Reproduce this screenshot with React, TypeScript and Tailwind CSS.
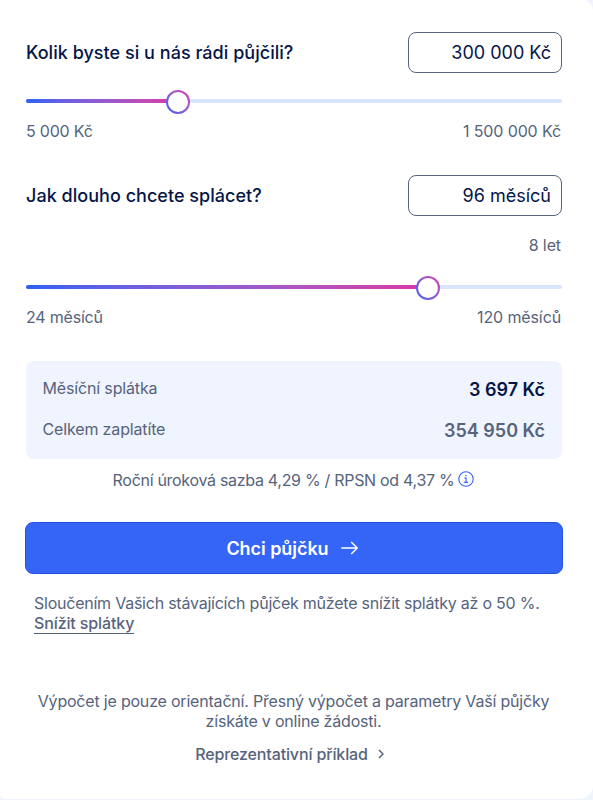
import React from "react";

type SliderProps = {
  percent: number;
  min: string;
  max: string;
};

const Slider = ({ percent, min, max }: SliderProps) => {
  return (
    <div>
      <div className="relative flex h-6 items-center">
        <div className="h-1 w-full overflow-hidden rounded-full bg-[#d9e4fd]">
          <div
            className="h-full bg-linear-to-r from-[#2a60f6] to-[#dc35a5]"
            style={{ width: `${percent}%` }}
          />
        </div>
        <div
          className="absolute top-px size-6 -translate-x-1/2 rounded-full bg-linear-to-tr from-[#2f5ff5] to-[#d637aa] p-[1.8px]"
          style={{ left: `${percent}%` }}
        >
          <div className="size-full rounded-full bg-white" />
        </div>
      </div>
      <div className="mt-2 flex justify-between leading-5">
        <span>{min}</span>
        <span className="pr-px tracking-[-0.12px]">{max}</span>
      </div>
    </div>
  );
};

const Field = ({ label, value }: { label: string; value: string }) => {
  return (
    <div className="flex h-[41px] items-center justify-between text-lg tracking-normal text-[#061549]">
      <label className="font-medium tracking-[0.03px]">{label}</label>
      <div className="flex h-full w-[154px] items-center justify-end rounded-lg border-[1.3px] border-[#56647d] pr-2.5">
        {value}
      </div>
    </div>
  );
};

const InfoIcon = () => (
  <svg className="-mt-[3px] size-4" viewBox="0 0 16 16" fill="none" stroke="#3563f5">
    <circle cx="8" cy="8" r="7.2" strokeWidth="1.1" />
    <path d="M6.4 7.1h1.7v4.2M6.1 11.4h4" strokeWidth="1.1" />
    <circle cx="7.9" cy="4.6" r="0.8" fill="#3563f5" stroke="none" />
  </svg>
);

const App = () => {
  return (
    <div className="h-[800px] w-[593px] bg-[#f0f4fe]">
      <main className="h-[799px] rounded-tr-[10px] rounded-br-[14px] rounded-bl-[5px] bg-white pt-8 pr-[31px] pl-[26px] font-['Inter',sans-serif] text-base tracking-[-0.2px] text-[#56637c]">
        <Field label="Kolik byste si u nás rádi půjčili?" value="300 000 Kč" />
        <div className="mt-4">
          <Slider percent={28.4} min="5 000 Kč" max="1 500 000 Kč" />
        </div>

        <div className="mt-[34px]">
          <Field label="Jak dlouho chcete splácet?" value="96 měsíců" />
        </div>
        <div className="mt-[19px] pr-px text-right leading-5 tracking-[-0.1px]">8 let</div>
        <div className="mt-5 -mb-px">
          <Slider percent={75} min="24 měsíců" max="120 měsíců" />
        </div>

        <div className="mt-[35px] h-[98px] rounded-lg bg-[#f0f4fe] pt-[17px] pr-[17px] pl-4">
          <div className="flex h-[22px] items-center justify-between">
            <span className="pb-0.5 pl-[0.5px] tracking-[-0.15px]">Měsíční splátka</span>
            <span className="pt-0.5 text-lg font-semibold tracking-normal text-[#061549]">3 697 Kč</span>
          </div>
          <div className="mt-[19px] flex h-[22px] items-center justify-between">
            <span className="pb-0.5 pl-[0.5px] tracking-[-0.15px]">Celkem zaplatíte</span>
            <span className="pt-0.5 text-lg font-semibold tracking-normal">354 950 Kč</span>
          </div>
        </div>

        <div className="mt-[11px] flex h-5 items-center justify-center gap-1 pr-px">
          <span className="tracking-[-0.3px]">Roční úroková sazba 4,29 % / RPSN od 4,37 %</span>
          <InfoIcon />
        </div>

        <button className="-mx-px mt-8 flex h-[52px] w-[538px] items-center justify-center gap-3 rounded-lg border border-[#2350df] bg-[#3565f6] pt-px pr-1 text-lg font-semibold tracking-[-0.05px] text-white">
          Chci půjčku
          <svg className="-mt-px h-4 w-[17px]" viewBox="0 0 17 16" fill="none" stroke="currentColor" strokeWidth="1.5">
            <path d="M0.3 8h15.7M10.2 2l6 6-6 6" />
          </svg>
        </button>

        <div className="mt-[19px] pl-2 leading-5">
          <p className="tracking-[-0.235px]">Sloučením Vašich stávajících půjček můžete snížit splátky až o 50 %.</p>
          <a className="inline-block border-b border-[#56637c] font-medium tracking-[-0.12px]">Snížit splátky</a>
        </div>

        <p className="mt-[57px] pr-px text-center leading-5">
          Výpočet je pouze orientační. Přesný výpočet a parametry Vaší půjčky
          <br />
          získáte v online žádosti.
        </p>
        <div className="mt-[13px] flex items-center justify-center gap-2.5 pr-[9px] leading-5 font-medium tracking-[-0.13px]">
          Reprezentativní příklad
          <svg className="h-2.5 w-1.5" viewBox="0 0 6 10" fill="none" stroke="currentColor" strokeWidth="1.5">
            <path d="M1 1l4 4-4 4" />
          </svg>
        </div>
      </main>
    </div>
  );
};

export default App;
